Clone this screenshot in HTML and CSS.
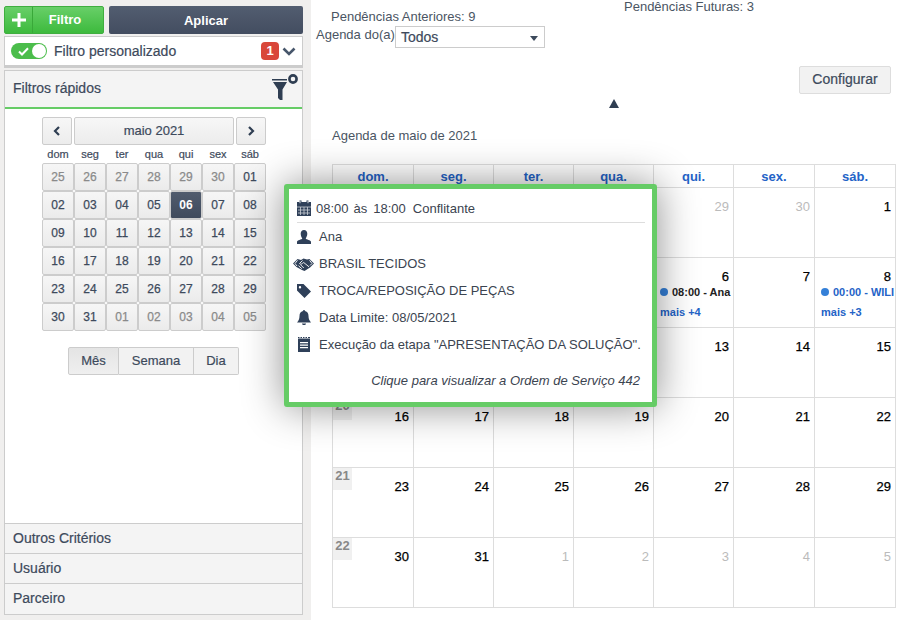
FILE: index.html
```html
<!DOCTYPE html>
<html lang="pt">
<head>
<meta charset="utf-8">
<title>Agenda</title>
<link rel="stylesheet" href="styles.css">
</head>
<body>
<div class="page">
  <aside class="side">
    <div class="actions">
      <button class="btn-green"><span class="plus">
        <svg width="14" height="14" viewBox="0 0 14 14"><path d="M5.5 0h3v5.5H14v3H8.5V14h-3V8.5H0v-3h5.5z" fill="#fff"/></svg>
      </span><span class="btn-green-label">Filtro</span></button>
      <button class="btn-dark">Aplicar</button>
    </div>
    <div class="custom">
      <span class="toggle">
        <svg class="check" width="11" height="9" viewBox="0 0 11 9"><path d="M1 4.500l3 3L10 1.200" fill="none" stroke="#fff" stroke-width="2"/></svg>
        <span class="knob"></span>
      </span>
      <span class="custom-label">Filtro personalizado</span>
      <span class="badge">1</span>
      <svg class="chev" width="14" height="9" viewBox="0 0 14 9"><path d="M1.500 1.500L7 7l5.500-5.500" fill="none" stroke="#47566b" stroke-width="2.600"/></svg>
    </div>
    <div class="panel">
      <div class="panel-head">
        <span class="panel-title">Filtros rápidos</span>
        <svg class="funnel" width="28" height="30" viewBox="0 0 28 30">
          <path d="M0 6h15v1.600H0zM1 9h14l-4.500 7.500V27H8l-2-2v-8.500z" fill="#2f3e52"/>
          <circle cx="21" cy="6" r="3.600" fill="none" stroke="#2f3e52" stroke-width="2.600"/>
        </svg>
      </div>
      <div class="panel-body">
        <div class="cal">
          <div class="cal-nav">
            <button class="nav-btn"><svg width="8" height="10" viewBox="0 0 8 10"><path d="M6 1L2 5l4 4" fill="none" stroke="#2f3e52" stroke-width="2.200"/></svg></button>
            <button class="nav-title">maio 2021</button>
            <button class="nav-btn"><svg width="8" height="10" viewBox="0 0 8 10"><path d="M2 1l4 4-4 4" fill="none" stroke="#2f3e52" stroke-width="2.200"/></svg></button>
          </div>
          <div class="cal-week">
            <span>dom</span><span>seg</span><span>ter</span><span>qua</span><span>qui</span><span>sex</span><span>sáb</span>
          </div>
          <div class="cal-grid">
            <span class="d off">25</span><span class="d off">26</span><span class="d off">27</span><span class="d off">28</span><span class="d off">29</span><span class="d off">30</span><span class="d">01</span>
            <span class="d">02</span><span class="d">03</span><span class="d">04</span><span class="d">05</span><span class="d sel">06</span><span class="d">07</span><span class="d">08</span>
            <span class="d">09</span><span class="d">10</span><span class="d">11</span><span class="d">12</span><span class="d">13</span><span class="d">14</span><span class="d">15</span>
            <span class="d">16</span><span class="d">17</span><span class="d">18</span><span class="d">19</span><span class="d">20</span><span class="d">21</span><span class="d">22</span>
            <span class="d">23</span><span class="d">24</span><span class="d">25</span><span class="d">26</span><span class="d">27</span><span class="d">28</span><span class="d">29</span>
            <span class="d">30</span><span class="d">31</span><span class="d off">01</span><span class="d off">02</span><span class="d off">03</span><span class="d off">04</span><span class="d off">05</span>
          </div>
        </div>
        <div class="views">
          <button class="view active">Mês</button><button class="view v-sem">Semana</button><button class="view v-dia">Dia</button>
        </div>
      </div>
      <div class="acc">Outros Critérios</div>
      <div class="acc">Usuário</div>
      <div class="acc acc-last">Parceiro</div>
    </div>
  </aside>

  <main class="main">
    <div class="pend">
      <span class="pend-a">Pendências Anteriores: 9</span>
      <span class="pend-f">Pendências Futuras: 3</span>
    </div>
    <div class="who">
      <span class="who-label">Agenda do(a)</span>
      <span class="select">Todos<i class="caret"></i></span>
    </div>
    <div class="config-row"><button class="config">Configurar</button></div>
    <div class="tri-row"><i class="tri"></i></div>
    <div class="title">Agenda de maio de 2021</div>
    <table class="month">
      <thead>
        <tr><th class="c81">dom.</th><th class="c80">seg.</th><th class="c80">ter.</th><th class="c80">qua.</th><th class="c80">qui.</th><th class="c81">sex.</th><th class="c81">sáb.</th></tr>
      </thead>
      <tbody>
        <tr><td></td><td></td><td></td><td></td><td><div class="n off">29</div></td><td><div class="n off">30</div></td><td><div class="n">1</div></td></tr>
        <tr><td></td><td></td><td></td><td></td>
          <td><div class="n">6</div><div class="ev"><i class="dot"></i>08:00 - Ana</div><div class="more">mais +4</div></td>
          <td><div class="n">7</div></td>
          <td><div class="n">8</div><div class="ev ev-blue"><i class="dot"></i>00:00 - WILI</div><div class="more">mais +3</div></td></tr>
        <tr><td></td><td></td><td></td><td></td><td><div class="n">13</div></td><td><div class="n">14</div></td><td><div class="n">15</div></td></tr>
        <tr><td><b class="wk">20</b><div class="n">16</div></td><td><div class="n">17</div></td><td><div class="n">18</div></td><td><div class="n">19</div></td><td><div class="n">20</div></td><td><div class="n">21</div></td><td><div class="n">22</div></td></tr>
        <tr><td><b class="wk">21</b><div class="n">23</div></td><td><div class="n">24</div></td><td><div class="n">25</div></td><td><div class="n">26</div></td><td><div class="n">27</div></td><td><div class="n">28</div></td><td><div class="n">29</div></td></tr>
        <tr><td><b class="wk">22</b><div class="n">30</div></td><td><div class="n">31</div></td><td><div class="n off">1</div></td><td><div class="n off">2</div></td><td><div class="n off">3</div></td><td><div class="n off">4</div></td><td><div class="n off">5</div></td></tr>
      </tbody>
    </table>
  </main>

  <div class="pop">
    <div class="pop-row pop-first">
      <svg class="ico" width="14" height="16" viewBox="0 0 14 16">
        <path d="M0 2h2.500V.5h2V2h5V.5h2V2H14v14H0z" fill="#2f4059"/>
        <path d="M3 1v2.200M11 1v2.200" stroke="#fff" stroke-width=".8"/>
        <path d="M0 7h14M1 10h12M1 13h12M3.500 7v8M7 7v8M10.500 7v8" stroke="#fff" stroke-width=".8" opacity=".75"/>
      </svg>
      <span class="t-time">08:00</span><span class="t-as">às</span><span class="t-time t-end">18:00</span><span class="t-conf">Conflitante</span>
    </div>
    <div class="pop-row">
      <svg class="ico" width="14" height="14" viewBox="0 0 14 14"><path d="M7 0c2 0 3.300 1.500 3.300 3.700S9.200 7.500 8.700 8.500c.5 1.100 5.300 1.600 5.300 3.300V14H0v-2.200c0-1.700 4.800-2.200 5.300-3.300C4.800 7.500 3.700 6 3.700 3.700S5 0 7 0z" fill="#2f4059"/></svg>
      <span class="pt">Ana</span>
    </div>
    <div class="pop-row">
      <svg class="ico-h" width="21" height="14" viewBox="0 0 21 14">
        <path d="M0 6.500L4.500 2l3.500 1 2.500-1.500L14 2.500 16.500 2 21 6.500 17 10.500 11.500 14 9 13 3.500 10z" fill="#2f4059"/>
        <path d="M9.500 3.500L6.500 6.500c1 1 2 .8 3-.2l1.200-.8 5.300 4.300M5.500 8.700l3.300 3M7.500 7.700l3.300 3.300M4.500 3.300L2 6.500 4 9M16.500 3.300L19 6.500 17 8.500" fill="none" stroke="#fff" stroke-width=".9" stroke-linejoin="round"/>
      </svg>
      <span class="pt pt-h">BRASIL TECIDOS</span>
    </div>
    <div class="pop-row">
      <svg class="ico" width="14" height="14" viewBox="0 0 14 14"><path d="M0 0h6.500L14 7.500 7.500 14 0 6.500zM3 2a1.200 1.200 0 1 0 0 2.400A1.200 1.200 0 0 0 3 2z" fill="#2f4059" fill-rule="evenodd"/></svg>
      <span class="pt">TROCA/REPOSIÇÃO DE PEÇAS</span>
    </div>
    <div class="pop-row">
      <svg class="ico" width="14" height="15" viewBox="0 0 14 15"><path d="M6 1a1 1 0 0 1 2 0c2.500.5 3.500 2.500 3.500 5 0 3 1 4.500 2.500 6.500H0C1.500 11 2.500 9 2.500 6c0-2.500 1-4.500 3.500-5zM5 13.500h4c0 2-4 2-4 0z" fill="#2f4059"/></svg>
      <span class="pt">Data Limite: 08/05/2021</span>
    </div>
    <div class="pop-row">
      <svg class="ico" width="14" height="15" viewBox="0 0 14 15"><path d="M1 1.500h12V15H1zM3 5v1.200h8V5zm0 2.500v1.200h8V7.500zm0 2.500v1.200h8V10zM1 0h1.500v1H1zm2.500 0H5v1H3.500zM6 0h1.500v1H6zm2.500 0H10v1H8.500zM11 0h2v1h-2z" fill="#2f4059" fill-rule="evenodd"/></svg>
      <span class="pt">Execução da etapa "APRESENTAÇÃO DA SOLUÇÃO".</span>
    </div>
    <div class="pop-foot">Clique para visualizar a Ordem de Serviço 442</div>
  </div>
</div>
</body>
</html>
```

FILE: styles.css
```css
* { box-sizing: border-box; }
html, body { margin: 0; padding: 0; }
body { font-family: "Liberation Sans", Arial, sans-serif; font-size: 13px; color: #3d4a5c; background: #fff; }
button { font-family: inherit; margin: 0; cursor: pointer; }
.page { display: flex; width: 913px; height: 620px; overflow: hidden; position: relative; }

.side { width: 311px; flex: none; background: #f0efee; padding: 6px 8px 5px 4px; display: flex; flex-direction: column; }
.actions { display: flex; gap: 5px; height: 28px; }
.btn-green { width: 100px; display: flex; padding: 0; border: 1px solid #3fae3f; border-radius: 2px; background: linear-gradient(#68cf68, #3dba3d); color: #fff; font-weight: 700; font-size: 13px; }
.plus { width: 28px; height: 100%; display: flex; align-items: center; justify-content: center; border-right: 1px solid #39a839; }
.btn-green-label { flex: 1; line-height: 26px; text-align: center; padding-right: 6px; }
.btn-dark { flex: 1; border: 0; border-radius: 2px; background: linear-gradient(#525d70, #434d60); color: #fff; font-weight: 700; font-size: 13px; }

.custom { margin-top: 2px; height: 32px; border: 1px solid #ccc; border-bottom: 3px solid #ccc; background: #fff; display: flex; align-items: center; padding: 0 6px; }
.toggle { width: 36px; height: 16px; border-radius: 8px; background: #4bbd4b; position: relative; flex: none; }
.check { position: absolute; left: 7px; top: 4px; }
.knob { position: absolute; right: 1px; top: 1px; width: 14px; height: 14px; border-radius: 50%; background: #fff; }
.custom-label { margin-left: 7px; flex: 1; font-size: 14px; -webkit-text-stroke: .2px; }
.badge { width: 18px; height: 18px; border-radius: 4px; background: #d9473a; color: #fff; font-weight: 700; font-size: 13px; line-height: 18px; text-align: center; }
.chev { margin-left: 3px; }

.panel { margin-top: 2px; flex: 1; border: 1px solid #ccc; background: #fff; display: flex; flex-direction: column; min-height: 0; }
.panel-head { height: 38px; flex: none; background: #f4f4f4; border-bottom: 2px solid #66cc66; display: flex; justify-content: space-between; padding: 0 2px 0 8px; }
.panel-title { font-size: 14px; line-height: 34px; -webkit-text-stroke: .2px; }
.funnel { margin-top: 2px; }
.panel-body { flex: 1; padding: 8px 0 0 37px; }

.cal { width: 224px; }
.cal-nav { display: flex; gap: 2px; height: 28px; }
.nav-btn, .nav-title { border: 1px solid #ccc; border-radius: 2px; background: linear-gradient(#f7f7f7, #ececec); padding: 0; color: #3d4a5c; font-size: 13px; }
.nav-btn { width: 30px; display: flex; align-items: center; justify-content: center; }
.nav-title { flex: 1; padding-bottom: 2px; -webkit-text-stroke: .2px; }
.cal-week { display: grid; grid-template-columns: repeat(7, 32px); height: 18px; line-height: 18px; text-align: center; font-size: 11px; -webkit-text-stroke: .2px; }
.cal-grid { display: grid; grid-template-columns: repeat(7, 32px); grid-auto-rows: 28px; }
.d { border: 1px solid #ccc; border-radius: 2px; background: linear-gradient(#f6f6f6, #ebebeb); text-align: center; line-height: 26px; font-size: 12px; -webkit-text-stroke: .25px; }
.d.off { color: #8a8a8a; }
.d.sel { background: linear-gradient(#515c6e, #3f4a5c); color: #fff; font-weight: 700; -webkit-text-stroke: 0; }
.views { display: flex; margin: 16px 0 0 26px; height: 28px; }
.view { border: 1px solid #ccc; border-left: 0; background: #f2f2f2; color: #3d4a5c; font-size: 13px; padding: 0 0 2px; -webkit-text-stroke: .2px; }
.view.active { width: 51px; border-left: 1px solid #ccc; background: linear-gradient(#e4e4e4, #efefef); border-radius: 2px 0 0 2px; }
.v-sem { width: 75px; }
.v-dia { width: 45px; border-radius: 0 2px 2px 0; }

.acc { height: 30px; flex: none; border-top: 1px solid #ccc; background: #f4f4f4; line-height: 28px; padding-left: 8px; font-size: 14px; -webkit-text-stroke: .2px; }
.acc-last { height: 31px; }

.main { flex: 1; min-width: 0; padding-left: 5px; }
.pend { display: flex; height: 26px; color: #4a5563; }
.pend-a { margin: 9px 0 0 15px; width: 293px; line-height: 15px; }
.pend-f { line-height: 13px; }
.who { display: flex; height: 22px; }
.who-label { width: 79px; line-height: 17px; color: #4a5563; }
.select { width: 150px; height: 22px; border: 1px solid #ccc; padding-left: 5px; line-height: 21px; position: relative; font-size: 14px; -webkit-text-stroke: .2px; }
.caret { position: absolute; right: 6px; top: 9px; border: 4px solid transparent; border-top: 5px solid #3d4a5c; border-bottom: 0; }
.config-row { display: flex; justify-content: flex-end; margin-top: 18px; padding-right: 22px; }
.config { width: 92px; height: 28px; border: 1px solid #ddd; border-radius: 2px; background: #f2f2f2; color: #3d4a5c; font-size: 14px; padding: 0 0 2px; -webkit-text-stroke: .2px; }
.tri-row { height: 9px; margin: 5px 0 0 293px; }
.tri { display: block; width: 0; border: 5px solid transparent; border-bottom: 9px solid #2f3e52; border-top: 0; }
.title { margin: 20px 0 0 16px; line-height: 16px; color: #4a5563; }

.month { margin: 20px 0 0 16px; width: 564px; border-collapse: collapse; table-layout: fixed; color: #000; }
.month th { height: 23px; border: 1px solid #ddd; padding: 0; color: #2463c7; font-size: 13px; font-weight: 700; text-align: center; }
.c81 { width: 81px; }
.c80 { width: 80px; }
.month td { height: 70px; border: 1px solid #ddd; padding: 0; vertical-align: top; position: relative; overflow: hidden; max-width: 0; white-space: nowrap; }
.n { text-align: right; padding: 11px 4px 0 0; line-height: 16px; font-size: 13px; -webkit-text-stroke: .25px; }
.n.off { color: #bbb; -webkit-text-stroke: 0; }
.wk { position: absolute; left: 0; top: 0; width: 19px; height: 22px; background: #f0f0f0; color: #888; font-size: 13px; line-height: 16px; text-align: center; }
.ev { padding-left: 6px; margin-top: 1px; font-size: 11px; font-weight: 700; line-height: 13px; color: #222; }
.ev-blue { color: #2463c7; }
.dot { display: inline-block; width: 8px; height: 8px; border-radius: 50%; background: #3580d8; margin-right: 4px; }
.more { padding-left: 6px; margin-top: 7px; font-size: 11px; line-height: 13px; color: #2463c7; font-weight: 700; }

.pop { position: absolute; left: 284px; top: 184px; width: 373px; height: 223px; background: #fff; border: 5px solid #66cc66; border-radius: 3px; box-shadow: 0 0 40px rgba(0,0,0,.45); padding: 7px 7px 0 8px; color: #3b4450; font-size: 13px; }
.pop-row { height: 27px; display: flex; align-items: center; }
.pop-first { border-bottom: 1px solid #ddd; padding-bottom: 2px; }
.ico { flex: none; width: 14px; }
.ico-h { flex: none; margin-left: -4px; }
.t-time { margin-left: 5px; }
.t-as { margin-left: 5px; }
.t-end { margin-left: 6px; }
.t-conf { margin-left: 7px; }
.pt { margin-left: 8px; }
.pt-h { margin-left: 5px; }
.pop-foot { margin-top: 15px; text-align: right; font-style: italic; padding-right: 5px; }
```
